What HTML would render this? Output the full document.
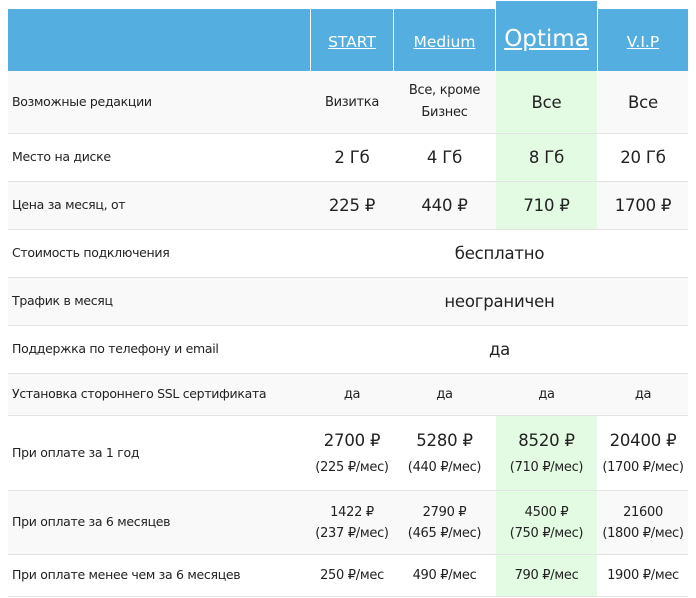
<html><head><style>
body{margin:0;background:#fff;font-family:"DejaVu Sans","Liberation Sans",sans-serif;color:#222}
.t{position:absolute;left:8px;top:0;width:680px}
.r{position:absolute;left:0;width:680px;border-bottom:1px solid #e3e3e3}
.c{position:absolute;top:0;height:100%;display:flex;align-items:center;justify-content:center;text-align:center;flex-direction:column}
.l{left:4px;justify-content:center;align-items:flex-start;font-size:12.5px;letter-spacing:-0.3px;top:-1px}
.a{left:303px;width:82px}.b{left:386px;width:101px}.o{left:488px;width:101px}.v{left:590px;width:90px}
.g{background:#e2fbe2}
.h a{color:#fff;text-decoration:underline}
.big{font-size:16.5px;letter-spacing:-0.2px}.sm{font-size:13px;letter-spacing:-0.3px}
</style></head><body>
<div class="t">
<div style="position:absolute;left:0;top:9px;width:680px;height:62px;background:#54afe0"></div>
<div style="position:absolute;left:302px;top:9px;width:1px;height:62px;background:#fff"></div>
<div style="position:absolute;left:385px;top:9px;width:1px;height:62px;background:#fff"></div>
<div style="position:absolute;left:487px;top:1px;width:101px;height:70px;background:#54afe0;border-left:1px solid #fff;border-right:1px solid #fff"></div>
<div class="h" style="position:absolute;top:9px;height:62px;width:680px">
<div class="c a" style="font-size:15.5px;top:2px"><a>START</a></div>
<div class="c b" style="font-size:15.5px;top:2px"><a>Medium</a></div>
<div class="c o" style="font-size:23px;top:-1px"><a>Optima</a></div>
<div class="c v" style="font-size:15.5px;top:2px"><a>V.I.P</a></div>
</div>

<div class="r" style="top:71px;height:62px;background:#f9f9f9"><div class="c l">Возможные редакции</div><div class="c a sm">Визитка</div><div class="c b sm" style="line-height:22px">Все, кроме<br>Бизнес</div><div class="c o g big">Все</div><div class="c v big">Все</div></div>
<div class="r" style="top:134px;height:47px"><div class="c l">Место на диске</div><div class="c a big">2 Гб</div><div class="c b big">4 Гб</div><div class="c o g big">8 Гб</div><div class="c v big">20 Гб</div></div>
<div class="r" style="top:182px;height:47px;background:#f9f9f9"><div class="c l">Цена за месяц, от</div><div class="c a big">225 ₽</div><div class="c b big">440 ₽</div><div class="c o g big">710 ₽</div><div class="c v big">1700 ₽</div></div>
<div class="r" style="top:230px;height:47px"><div class="c l">Стоимость подключения</div><div class="c big" style="left:303px;width:377px">бесплатно</div></div>
<div class="r" style="top:278px;height:47px;background:#f9f9f9"><div class="c l">Трафик в месяц</div><div class="c big" style="left:303px;width:377px">неограничен</div></div>
<div class="r" style="top:326px;height:47px"><div class="c l">Поддержка по телефону и email</div><div class="c big" style="left:303px;width:377px">да</div></div>
<div class="r" style="top:374px;height:41px;background:#f9f9f9"><div class="c l">Установка стороннего SSL сертификата</div><div class="c a sm">да</div><div class="c b sm">да</div><div class="c o sm">да</div><div class="c v sm">да</div></div>
<div class="r" style="top:416px;height:74px"><div class="c l">При оплате за 1 год</div>
<div class="c a"><span class="big">2700 ₽</span><span class="sm" style="margin-top:10px">(225 ₽/мес)</span></div>
<div class="c b"><span class="big">5280 ₽</span><span class="sm" style="margin-top:10px">(440 ₽/мес)</span></div>
<div class="c o g"><span class="big">8520 ₽</span><span class="sm" style="margin-top:10px">(710 ₽/мес)</span></div>
<div class="c v"><span class="big">20400 ₽</span><span class="sm" style="margin-top:10px">(1700 ₽/мес)</span></div></div>
<div class="r" style="top:491px;height:63px;background:#f9f9f9"><div class="c l">При оплате за 6 месяцев</div>
<div class="c a sm" style="line-height:21px">1422 ₽<br>(237 ₽/мес)</div>
<div class="c b sm" style="line-height:21px">2790 ₽<br>(465 ₽/мес)</div>
<div class="c o g sm" style="line-height:21px">4500 ₽<br>(750 ₽/мес)</div>
<div class="c v sm" style="line-height:21px">21600<br>(1800 ₽/мес)</div></div>
<div class="r" style="top:555px;height:41px"><div class="c l">При оплате менее чем за 6 месяцев</div><div class="c a sm">250 ₽/мес</div><div class="c b sm">490 ₽/мес</div><div class="c o g sm">790 ₽/мес</div><div class="c v sm">1900 ₽/мес</div></div>
</div>
</body></html>
